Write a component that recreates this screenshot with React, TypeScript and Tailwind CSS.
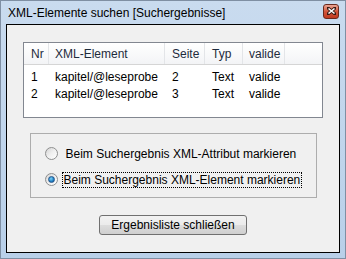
const FONT = "font-['Liberation_Sans',Arial,sans-serif]";

const rows = [
  { nr: '1', el: 'kapitel/@leseprobe', seite: '2', typ: 'Text', valide: 'valide' },
  { nr: '2', el: 'kapitel/@leseprobe', seite: '3', typ: 'Text', valide: 'valide' },
];

const cols = 'grid grid-cols-[25px_116px_40px_38px_42px_1fr]';

function Radio({ checked }: { checked?: boolean }) {
  return (
    <span className="w-[13px] h-[13px] rounded-full border border-[#8e8f8f] bg-gradient-to-br from-[#d4d4d4] via-[#f0f0f0] to-white flex items-center justify-center shrink-0">
      {checked && (
        <span className="w-[7px] h-[7px] rounded-full bg-[radial-gradient(circle_at_40%_35%,#7cd2f7,#1f7fc4_60%,#0d4f8b)] border border-[#25558a]" />
      )}
    </span>
  );
}

export default function App() {
  return (
    <div className={`w-[346px] h-[259px] flex flex-col border border-[#7f8fa3] bg-gradient-to-b from-[#c9dbef] to-[#b9d0e9] px-[5px] pb-[5px] ${FONT} text-[12px] text-black`}>
      {/* title bar */}
      <div className="h-[23px] flex items-center justify-between pl-[2px] pr-[1px]">
        <span className="text-[12px] text-black leading-none">XML-Elemente suchen [Suchergebnisse]</span>
        <button className="w-[16px] h-[15px] -mt-[3px] rounded-[3px] border border-[#6b2a1e] bg-gradient-to-b from-[#e9a595] via-[#d2563c] to-[#c0391f] flex items-center justify-center">
          <svg width="9" height="8" viewBox="0 0 9 8">
            <path d="M1 1 L8 7 M8 1 L1 7" stroke="#3a1a14" strokeWidth="3.2" strokeLinecap="square" />
            <path d="M1.5 1.5 L7.5 6.5 M7.5 1.5 L1.5 6.5" stroke="#fff" strokeWidth="1.6" />
          </svg>
        </button>
      </div>

      {/* client area */}
      <div className="flex-1 border border-black bg-[#f0f0f0] flex flex-col items-center pt-[17px]">
        {/* list view */}
        <div className="w-[300px] h-[76px] border border-[#828790] bg-white">
          <div className={`${cols} h-[22px] border-b border-[#d5d5d5] bg-gradient-to-b from-white to-[#f3f4f6] text-[#1e2b3c]`}>
            <div className="pl-[7px] flex items-center border-r border-[#e3e5e8]">Nr</div>
            <div className="pl-[6px] flex items-center border-r border-[#e3e5e8]">XML-Element</div>
            <div className="pl-[7px] flex items-center border-r border-[#e3e5e8]">Seite</div>
            <div className="pl-[7px] flex items-center border-r border-[#e3e5e8]">Typ</div>
            <div className="pl-[6px] flex items-center border-r border-[#e3e5e8]">valide</div>
            <div />
          </div>
          <div className="pt-[3px]">
            {rows.map((r) => (
              <div key={r.nr} className={`${cols} h-[17px] items-center`}>
                <div className="pl-[7px]">{r.nr}</div>
                <div className="pl-[6px]">{r.el}</div>
                <div className="pl-[7px]">{r.seite}</div>
                <div className="pl-[7px]">{r.typ}</div>
                <div className="pl-[6px]">{r.valide}</div>
                <div />
              </div>
            ))}
          </div>
        </div>

        {/* group box */}
        <div className="mt-[15px] w-[287px] h-[65px] border border-[#adadad] flex flex-col pt-[13px] pl-[14px] gap-[13px]">
          <label className="flex items-center h-[13px]">
            <Radio />
            <span className="ml-[6px] px-[2px]">Beim Suchergebnis XML-Attribut markieren</span>
          </label>
          <label className="flex items-center h-[13px]">
            <Radio checked />
            <span className="ml-[4px] px-[1px] h-[16px] flex items-center border border-dotted border-black">
              Beim Suchergebnis XML-Element markieren
            </span>
          </label>
        </div>

        {/* button */}
        <button className="mt-[17px] w-[148px] h-[20px] rounded-[3px] border border-[#707070] bg-[linear-gradient(to_bottom,#f2f2f2_0%,#ebebeb_50%,#dddddd_51%,#cfcfcf_100%)] flex items-center justify-center text-black">
          Ergebnisliste schließen
        </button>
      </div>
    </div>
  );
}
